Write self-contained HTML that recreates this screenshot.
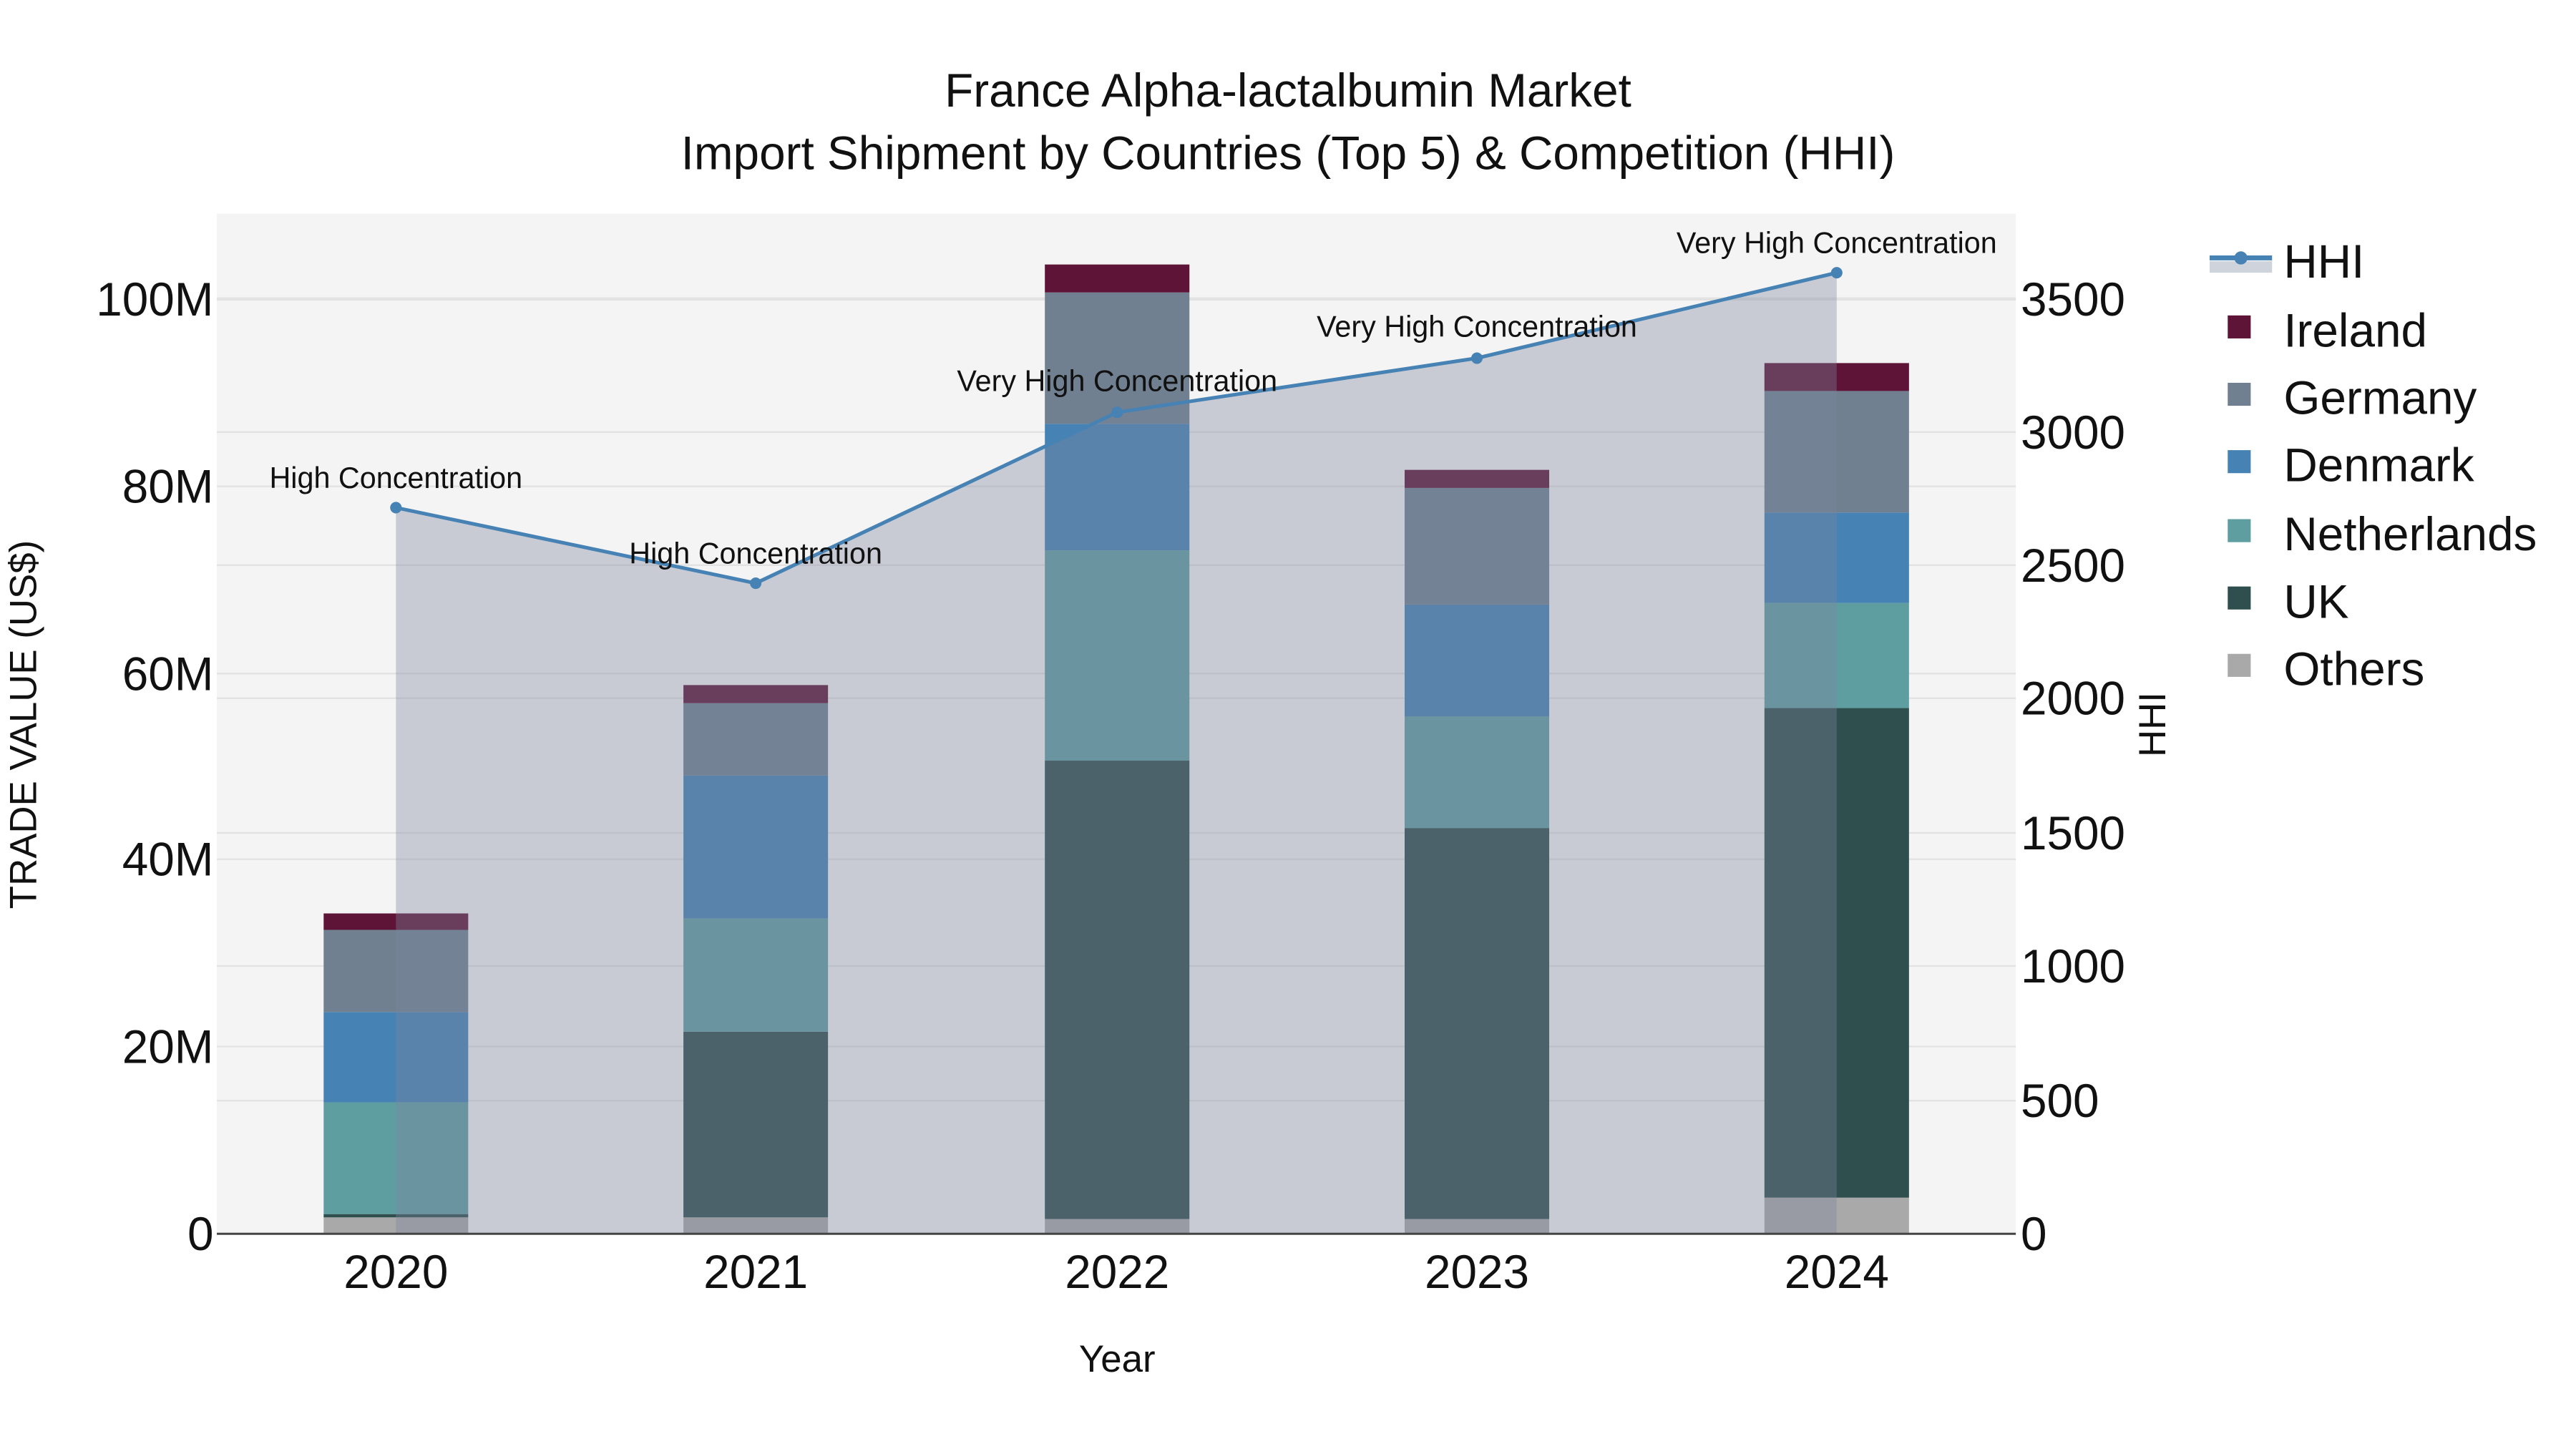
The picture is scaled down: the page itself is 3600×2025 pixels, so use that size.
<!DOCTYPE html>
<html><head><meta charset="utf-8"><style>
html,body{margin:0;padding:0;background:#fff;}
svg{display:block;}
text{font-family:"Liberation Sans",sans-serif;fill:#111;}
</style></head><body>
<svg width="3600" height="2025" viewBox="0 0 1568 882" preserveAspectRatio="none">
<rect x="0" y="0" width="1568" height="882" fill="#fff"/>
<rect x="132" y="130" width="1095" height="621" fill="#f4f4f4"/>
<g stroke="#e2e2e2" stroke-width="1">
<line x1="132" x2="1227" y1="637" y2="637"/><line x1="132" x2="1227" y1="523" y2="523"/>
<line x1="132" x2="1227" y1="410" y2="410"/><line x1="132" x2="1227" y1="296" y2="296"/>
<line x1="132" x2="1227" y1="182" y2="182" stroke-width="2"/>
<line x1="132" x2="1227" y1="670" y2="670"/><line x1="132" x2="1227" y1="588" y2="588"/>
<line x1="132" x2="1227" y1="507" y2="507"/><line x1="132" x2="1227" y1="425" y2="425"/>
<line x1="132" x2="1227" y1="344" y2="344"/><line x1="132" x2="1227" y1="263" y2="263"/>
</g>
<g>
<rect x="197" y="741" width="88" height="10" fill="#a9a9a9"/>
<rect x="197" y="739" width="88" height="2" fill="#2f4f4f"/>
<rect x="197" y="671" width="88" height="68" fill="#5f9ea0"/>
<rect x="197" y="616" width="88" height="55" fill="#4682b4"/>
<rect x="197" y="566" width="88" height="50" fill="#708090"/>
<rect x="197" y="556" width="88" height="10" fill="#5e1437"/>

<rect x="416" y="741" width="88" height="10" fill="#a9a9a9"/>
<rect x="416" y="628" width="88" height="113" fill="#2f4f4f"/>
<rect x="416" y="559" width="88" height="69" fill="#5f9ea0"/>
<rect x="416" y="472" width="88" height="87" fill="#4682b4"/>
<rect x="416" y="428" width="88" height="44" fill="#708090"/>
<rect x="416" y="417" width="88" height="11" fill="#5e1437"/>

<rect x="636" y="742" width="88" height="9" fill="#a9a9a9"/>
<rect x="636" y="463" width="88" height="279" fill="#2f4f4f"/>
<rect x="636" y="335" width="88" height="128" fill="#5f9ea0"/>
<rect x="636" y="258" width="88" height="77" fill="#4682b4"/>
<rect x="636" y="178" width="88" height="80" fill="#708090"/>
<rect x="636" y="161" width="88" height="17" fill="#5e1437"/>

<rect x="855" y="742" width="88" height="9" fill="#a9a9a9"/>
<rect x="855" y="504" width="88" height="238" fill="#2f4f4f"/>
<rect x="855" y="436" width="88" height="68" fill="#5f9ea0"/>
<rect x="855" y="368" width="88" height="68" fill="#4682b4"/>
<rect x="855" y="297" width="88" height="71" fill="#708090"/>
<rect x="855" y="286" width="88" height="11" fill="#5e1437"/>

<rect x="1074" y="729" width="88" height="22" fill="#a9a9a9"/>
<rect x="1074" y="431" width="88" height="298" fill="#2f4f4f"/>
<rect x="1074" y="367" width="88" height="64" fill="#5f9ea0"/>
<rect x="1074" y="312" width="88" height="55" fill="#4682b4"/>
<rect x="1074" y="238" width="88" height="74" fill="#708090"/>
<rect x="1074" y="221" width="88" height="17" fill="#5e1437"/>
</g>
<polygon points="241,751 241,309 460,355 680,251 899,218 1118,166 1118,751" fill="rgb(125,133,157)" fill-opacity="0.37"/>
<polyline points="241,309 460,355 680,251 899,218 1118,166" fill="none" stroke="#4682b4" stroke-width="2.2"/>
<g fill="#4682b4"><circle cx="241" cy="309" r="3.5"/><circle cx="460" cy="355" r="3.5"/><circle cx="680" cy="251" r="3.5"/><circle cx="899" cy="218" r="3.5"/><circle cx="1118" cy="166" r="3.5"/></g>
<line x1="132" x2="1227" y1="751" y2="751" stroke="#444" stroke-width="1.3"/>
<g font-size="18" text-anchor="middle">
<text x="241" y="297">High Concentration</text>
<text x="460" y="343">High Concentration</text>
<text x="680" y="238">Very High Concentration</text>
<text x="899" y="205">Very High Concentration</text>
<text x="1118" y="154">Very High Concentration</text>
</g>
<g font-size="28.6" text-anchor="middle">
<text x="784" y="65">France Alpha-lactalbumin Market</text>
<text x="784" y="103">Import Shipment by Countries (Top 5) &amp; Competition (HHI)</text>
</g>
<g font-size="28.6" text-anchor="end">
<text x="130" y="761">0</text><text x="130" y="647">20M</text><text x="130" y="533">40M</text>
<text x="130" y="420">60M</text><text x="130" y="306">80M</text><text x="130" y="192">100M</text>
</g>
<g font-size="28.6">
<text x="1230" y="761">0</text><text x="1230" y="680">500</text><text x="1230" y="598">1000</text>
<text x="1230" y="517">1500</text><text x="1230" y="435">2000</text><text x="1230" y="354">2500</text>
<text x="1230" y="273">3000</text><text x="1230" y="192">3500</text>
</g>
<g font-size="28.6" text-anchor="middle">
<text x="241" y="784">2020</text><text x="460" y="784">2021</text><text x="680" y="784">2022</text>
<text x="899" y="784">2023</text><text x="1118" y="784">2024</text>
</g>
<text x="680" y="835" font-size="23" text-anchor="middle">Year</text>
<text transform="translate(22,441) rotate(-90)" font-size="23" text-anchor="middle">TRADE VALUE (US$)</text>
<text transform="translate(1318,441) rotate(-90)" font-size="23" text-anchor="middle">HHI</text>
<rect x="1345" y="159" width="38" height="7" fill="#cfd4dc"/>
<line x1="1345" x2="1383" y1="157" y2="157" stroke="#4682b4" stroke-width="3"/>
<circle cx="1364" cy="157" r="4" fill="#4682b4"/>
<g font-size="28.6">
<text x="1390" y="169">HHI</text>
<text x="1390" y="211">Ireland</text>
<text x="1390" y="252">Germany</text>
<text x="1390" y="293">Denmark</text>
<text x="1390" y="335">Netherlands</text>
<text x="1390" y="376">UK</text>
<text x="1390" y="417">Others</text>
</g>
<rect x="1356" y="192" width="14" height="14" fill="#5e1437"/>
<rect x="1356" y="233" width="14" height="14" fill="#708090"/>
<rect x="1356" y="274" width="14" height="14" fill="#4682b4"/>
<rect x="1356" y="316" width="14" height="14" fill="#5f9ea0"/>
<rect x="1356" y="357" width="14" height="14" fill="#2f4f4f"/>
<rect x="1356" y="398" width="14" height="14" fill="#a9a9a9"/>
</svg>
</body></html>
